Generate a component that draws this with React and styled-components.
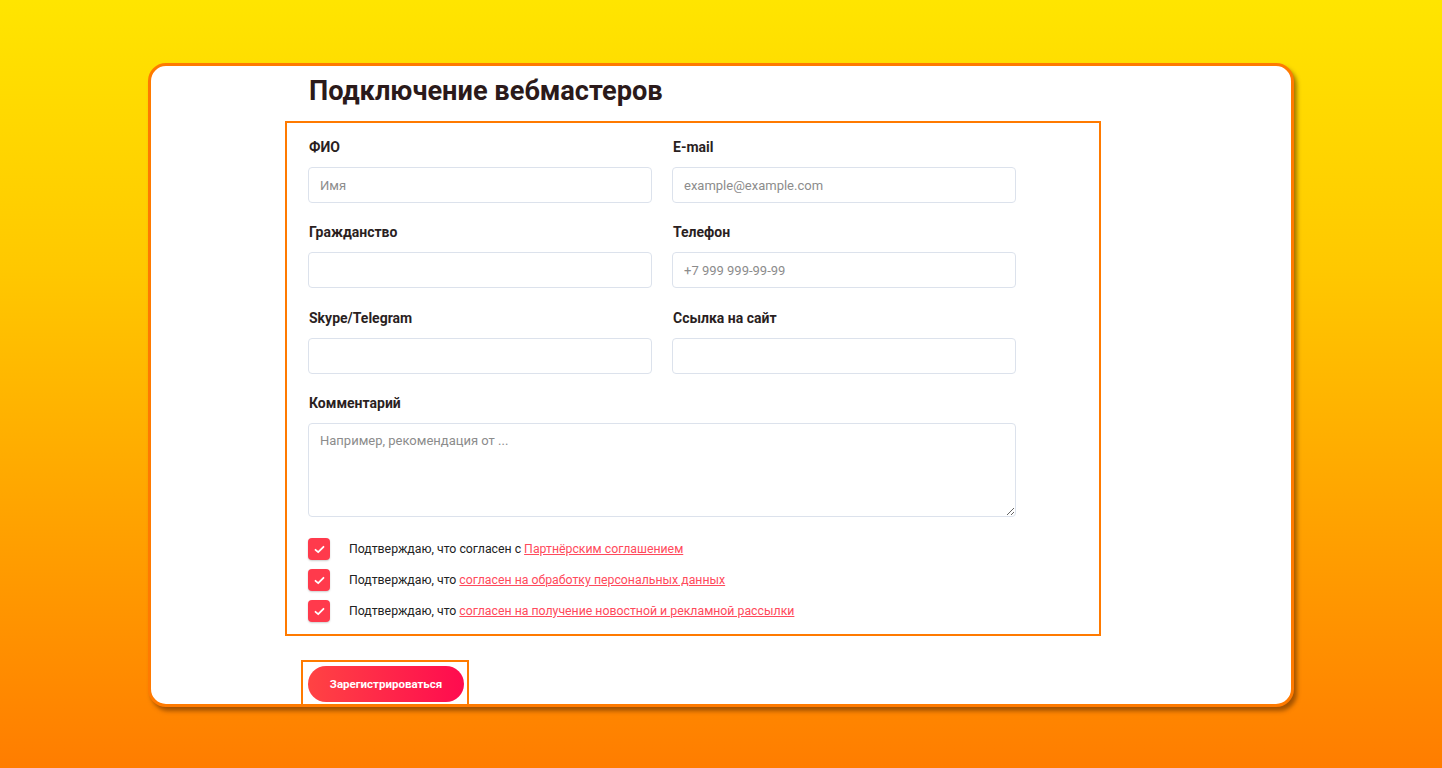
import React from 'react';
import styled, { createGlobalStyle } from 'styled-components';

const GlobalStyle = createGlobalStyle`
  html, body {
    margin: 0;
    padding: 0;
  }
  body {
    font-family: Roboto, "Liberation Sans", sans-serif;
    background: linear-gradient(180deg, #ffe500 0%, #ffc800 35%, #ff9a00 75%, #ff7d00 100%);
    min-height: 768px;
  }
`;

const Page = styled.div`
  height: 768px;
  padding-top: 63px;
  box-sizing: border-box;
`;

const Card = styled.div`
  width: 1146px;
  height: 644px;
  margin: 0 auto;
  box-sizing: border-box;
  background: #fff;
  border: 3px solid #ff7a00;
  border-radius: 18px;
  box-shadow: 3px 4px 4px rgba(90, 40, 0, 0.55);
  overflow: hidden;
  padding: 8px 0 0 134px;
`;

const Title = styled.h1`
  margin: 0 0 13px 24px;
  font-size: 27.2px;
  line-height: 34px;
  font-weight: 700;
  color: #2b1a1a;
`;

const FormBox = styled.div`
  width: 816px;
  box-sizing: border-box;
  border: 2px solid #ff7a00;
  padding: 14px 0 12px 21px;
`;

const Grid = styled.div`
  width: 708px;
  display: grid;
  grid-template-columns: 344px 344px;
  column-gap: 20px;
  row-gap: 19.4px;
`;

const Field = styled.div`
  display: flex;
  flex-direction: column;
  grid-column: ${p => (p.$wide ? '1 / span 2' : 'auto')};
`;

const Label = styled.label`
  font-size: 14px;
  line-height: 20px;
  font-weight: 700;
  color: #2b1f1f;
  margin: 0 0 10px 1px;
`;

const Input = styled.input`
  height: 36px;
  box-sizing: border-box;
  border: 1px solid #dce2ec;
  border-radius: 4px;
  padding: 0 11px;
  font-family: Roboto, "Liberation Sans", sans-serif;
  font-size: 13px;
  color: #333;
  outline: none;
  &::placeholder {
    color: #8c8c8c;
  }
`;

const TextArea = styled.textarea`
  height: 94px;
  box-sizing: border-box;
  border: 1px solid #dce2ec;
  border-radius: 4px;
  padding: 9px 11px;
  font-family: Roboto, "Liberation Sans", sans-serif;
  font-size: 13px;
  outline: none;
  resize: vertical;
  &::placeholder {
    color: #8c8c8c;
  }
`;

const Checks = styled.div`
  margin-top: 21px;
  display: flex;
  flex-direction: column;
  gap: 9px;
`;

const CheckRow = styled.div`
  display: flex;
  align-items: center;
  height: 22px;
  font-size: 12.3px;
  color: #222;
`;

const Box = styled.span`
  width: 22px;
  height: 22px;
  border-radius: 4px;
  background: #ff3a4c;
  box-shadow: 0 1px 2px rgba(0, 0, 0, 0.2);
  display: flex;
  align-items: center;
  justify-content: center;
  margin-right: 19px;
  flex-shrink: 0;
`;

const Link = styled.a`
  color: #ff4a5c;
  text-decoration: underline;
  margin-left: 3px;
`;

const ButtonBox = styled.div`
  display: inline-block;
  margin: 24px 0 0 16px;
  border: 2px solid #ff7a00;
  padding: 4px 3px 10px 5px;
`;

const Button = styled.button`
  width: 156px;
  height: 36px;
  border: none;
  border-radius: 18px;
  background: linear-gradient(90deg, #ff4343 0%, #ff0b4f 100%);
  color: #fff;
  font-family: Roboto, "Liberation Sans", sans-serif;
  font-size: 11.5px;
  font-weight: 700;
  display: block;
`;

const Tick = () => (
  <svg width="11" height="9" viewBox="0 0 11 9" fill="none">
    <path d="M1.5 4.8 L4.2 7.2 L9.5 1.8" stroke="#fff" strokeWidth="1.8" strokeLinecap="round" strokeLinejoin="round" />
  </svg>
);

const agreements = [
  { text: 'Подтверждаю, что согласен с', link: 'Партнёрским соглашением' },
  { text: 'Подтверждаю, что', link: 'согласен на обработку персональных данных' },
  { text: 'Подтверждаю, что', link: 'согласен на получение новостной и рекламной рассылки' },
];

export default function App() {
  return (
    <>
      <GlobalStyle />
      <Page>
        <Card>
          <Title>Подключение вебмастеров</Title>
          <FormBox>
            <Grid>
              <Field>
                <Label>ФИО</Label>
                <Input placeholder="Имя" />
              </Field>
              <Field>
                <Label>E-mail</Label>
                <Input placeholder="example@example.com" />
              </Field>
              <Field>
                <Label>Гражданство</Label>
                <Input />
              </Field>
              <Field>
                <Label>Телефон</Label>
                <Input placeholder="+7 999 999-99-99" />
              </Field>
              <Field>
                <Label>Skype/Telegram</Label>
                <Input />
              </Field>
              <Field>
                <Label>Ссылка на сайт</Label>
                <Input />
              </Field>
              <Field $wide>
                <Label>Комментарий</Label>
                <TextArea placeholder="Например, рекомендация от ..." />
              </Field>
            </Grid>
            <Checks>
              {agreements.map((a, i) => (
                <CheckRow key={i}>
                  <Box><Tick /></Box>
                  {a.text}
                  <Link href="#">{a.link}</Link>
                </CheckRow>
              ))}
            </Checks>
          </FormBox>
          <ButtonBox>
            <Button>Зарегистрироваться</Button>
          </ButtonBox>
        </Card>
      </Page>
    </>
  );
}
